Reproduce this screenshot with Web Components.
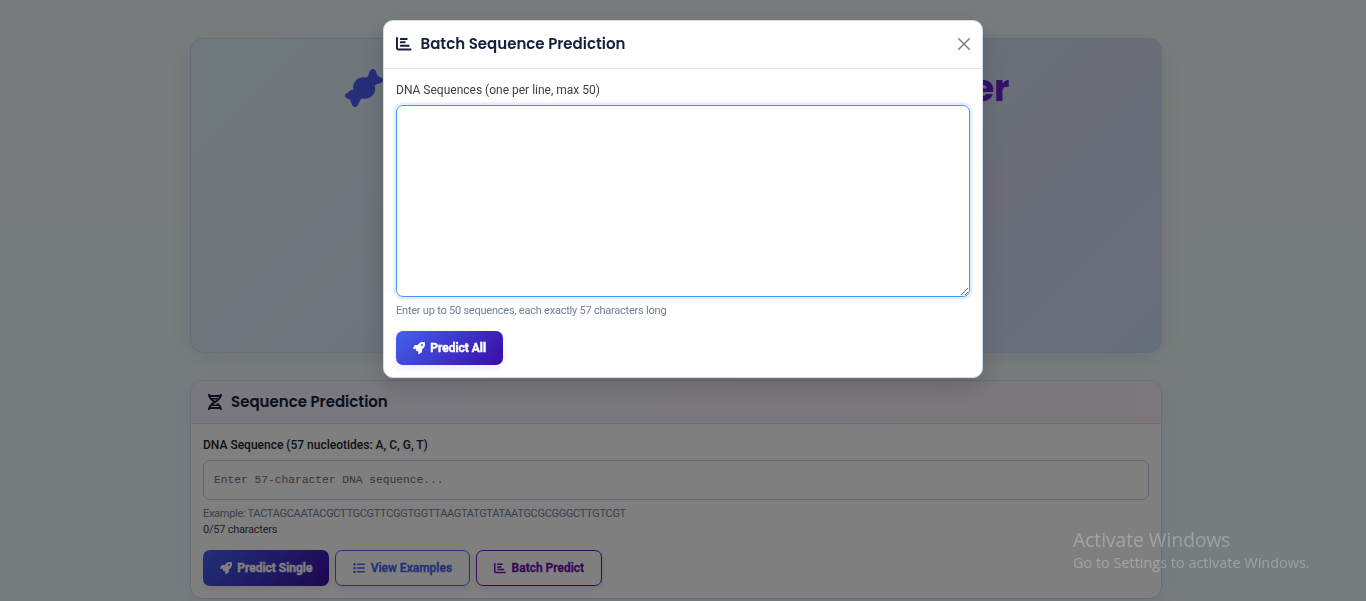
<!DOCTYPE html>
<html lang="en">
<head>
<meta charset="utf-8">
<title>Sequence Prediction</title>
<style>
html,body{margin:0;height:100%;overflow:hidden}
body{font-family:Roboto,"Liberation Sans",sans-serif;font-size:12px;line-height:18px;color:#212529;background:linear-gradient(180deg,#f1f8f9,#f0f8fc 35%,#eff8fe)}
</style>
</head>
<body>
<predictor-page></predictor-page>
<batch-modal heading="Batch Sequence Prediction">
  <form-field label="DNA Sequences (one per line, max 50)" multiline hint="Enter up to 50 sequences, each exactly 57 characters long" style="--hint-tracking:-.225px"></form-field>
  <app-button icon="rocket" variant="primary">Predict All</app-button>
</batch-modal>
<activation-note></activation-note>
<script>
const ICONS={
 chart:['0 0 512 512','<path d="M32 32c17.7 0 32 14.3 32 32V400c0 8.800 7.200 16 16 16H480c17.700 0 32 14.300 32 32s-14.300 32-32 32H80c-44.200 0-80-35.800-80-80V64C0 46.300 14.300 32 32 32zm96 64c0-17.700 14.300-32 32-32l192 0c17.700 0 32 14.300 32 32s-14.300 32-32 32l-192 0c-17.700 0-32-14.300-32-32zm32 80H288c17.700 0 32 14.300 32 32s-14.300 32-32 32H160c-17.700 0-32-14.300-32-32s14.300-32 32-32zm0 112H416c17.700 0 32 14.300 32 32s-14.300 32-32 32H160c-17.700 0-32-14.300-32-32s14.300-32 32-32z"/>'],
 rocket:['0 0 512 512','<path d="M156.600 384.900L125.700 354c-8.500-8.500-11.500-20.800-7.700-32.200c3-8.900 7-20.500 11.800-33.800L24 288c-8.600 0-16.600-4.600-20.900-12.100s-4.200-16.700 .2-24.100l52.500-88.500c13-21.900 36.500-35.300 61.900-35.300l82.300 0c2.400-4 4.800-7.700 7.200-11.300C289.100-4.100 411.100-8.100 483.900 5.300c11.600 2.100 20.600 11.200 22.800 22.800c13.400 72.900 9.300 194.800-111.400 276.700c-3.500 2.400-7.300 4.800-11.300 7.200v82.300c0 25.400-13.400 49-35.300 61.900l-88.500 52.500c-7.400 4.400-16.600 4.500-24.100 .2s-12.100-12.200-12.100-20.900V380.800c-14.100 4.900-26.400 8.900-35.700 11.900c-11.200 3.600-23.400 .5-31.800-7.800zM384 168a40 40 0 1 0 0-80 40 40 0 1 0 0 80z"/>'],
 list:['0 0 512 512','<rect x="16" y="48" width="96" height="96" rx="24"/><rect x="16" y="208" width="96" height="96" rx="24"/><rect x="16" y="368" width="96" height="96" rx="24"/><rect x="160" y="64" width="352" height="64" rx="32"/><rect x="160" y="224" width="352" height="64" rx="32"/><rect x="160" y="384" width="352" height="64" rx="32"/>'],
 dna:['0 0 448 512','<path d="M.1 494.1c-1.100 9.500 6.300 17.800 15.900 17.800l32.300.1c8.100 0 14.900-5.900 16-13.900.7-4.900 1.800-11.100 3.400-18.100H380c1.600 6.900 2.900 13.200 3.500 18.100 1.100 8 7.900 14 16 13.900l32.300-.1c9.600 0 17.100-8.300 15.900-17.800-4.600-37.900-25.600-129-118.900-207.700-17.600 12.400-37.100 24.200-58.500 35.400 6.200 4.600 11.400 9.400 17 14.200H159.700c21.300-18.100 47-35.600 78.700-51.400C410.500 199.100 442.100 65.800 447.900 17.900 449 8.400 441.600.1 432 .1L399.600 0c-8.100 0-14.900 5.900-16 13.900-.7 4.900-1.800 11.100-3.400 18.100H67.800c-1.600-7-2.700-13.100-3.400-18.100-1.100-8-7.900-14-16-13.900L16.100.1C6.500.1-1 8.400.1 17.900 5.300 60.800 31.400 171.800 160 256 31.500 340.200 5.300 451.200.1 494.100zM224 219.600c-25.100-13.700-46.400-28.400-64.300-43.600h128.500c-17.800 15.200-39.100 30-64.200 43.600zM355.100 96c-5.800 10.400-12.800 21.100-21 32H114c-8.300-10.900-15.300-21.600-21-32h262.200zM92.900 416c5.800-10.400 12.800-21.100 21.100-32h219.400c8.300 10.900 15.400 21.600 21.200 32H92.900z"/>'],
 candy:['0 0 38 38','<path d="M8.500 21.500C7 20 5.500 21.500 4 22.800C2 24.300 0 24.500 0 26.500C0 28.500 1.500 29.300 3 29.800C5 30.500 5.600 31.500 6.200 33.500C6.800 35.800 7.600 38 9.600 38C11.800 38 13 36.500 14 34C14.700 32 15.500 30.500 16.500 29.500C25.500 31.500 32 24 29.700 16.500C31 15 33 15 35 14.200C37 13.500 38 12.500 38 10.800C38 9 36.500 8.500 35 8C33 7.300 32.300 6.300 31.700 4.500C31 2.200 30.200 0 28.200 0C26.200 0 25 1.500 24.200 3.800C23.500 6 23 7.500 21.500 8.600C12.500 7 6.500 14 8.500 21.500Z"/>'],
 close:['0 0 16 16','<path d="M2 2L14 14M14 2L2 14" fill="none" stroke="currentColor" stroke-width="1.7" stroke-linecap="round"/>']
};
const define=(name,render)=>customElements.define(name,class extends HTMLElement{
  connectedCallback(){ if(!this.shadowRoot) this.attachShadow({mode:'open'}).innerHTML=render(this); }
});

define('app-icon',el=>{const [box,art]=ICONS[el.getAttribute('name')];
 return `<style>:host{display:block;flex:none;width:12px;height:12px}svg{display:block;width:100%;height:100%;fill:currentColor}</style><svg viewBox="${box}">${art}</svg>`;});

define('app-button',el=>`<style>
:host{display:inline-flex}
button{all:unset;box-sizing:border-box;display:flex;align-items:center;gap:5.500px;padding:8px 16.800px;border-radius:7px;font:600 12px/18px Roboto,"Liberation Sans",sans-serif;white-space:nowrap;-webkit-text-stroke:.5px currentColor;box-shadow:0 3px 7px rgba(0,0,0,.08)}
.primary{color:#fff;background:linear-gradient(135deg,#4361ee,#3a0ca3)}
.outline,.accent{border:1px solid;color:#4361ee;-webkit-text-stroke-width:.3px;padding:7px 17px}
.accent{color:#7209b7}
</style><button class="${el.getAttribute('variant')}"><app-icon name="${el.getAttribute('icon')}"></app-icon><slot></slot></button>`);

define('form-field',el=>{const multi=el.hasAttribute('multiline');
 return `<style>
:host{display:flex;flex-direction:column}
label{font-weight:${multi?400:500};color:${multi?'#3c3f43':'#212529'};line-height:18px;margin-bottom:6px}
textarea,input{box-sizing:border-box;width:100%;border-radius:7px;outline:0;background:transparent;font:11.250px/18px "Liberation Mono",monospace;margin:0}
textarea{height:192px;border:1px solid #4895ef;box-shadow:0 0 0 2.500px rgba(72,149,239,.16);resize:vertical}
input{height:40px;border:1px solid #c3cfe0;padding:0 10px}
input::placeholder{color:#6c6c6c;opacity:1}
small{font-size:11px;letter-spacing:var(--hint-tracking,0);line-height:16px;color:#718096;margin-top:5px;padding-top:.5px;height:15.500px}
</style><label>${el.getAttribute('label')}</label>${multi?'<textarea></textarea>':`<input placeholder="${el.getAttribute('placeholder')}">`}<small>${el.getAttribute('hint')}</small>`;});

define('hero-banner',()=>`<style>
:host{display:block;box-sizing:border-box;height:315px;padding-top:28px;border:1px solid rgba(190,212,235,.55);border-radius:14px;background:linear-gradient(135deg,#dff1fb 5%,#d9e5f5 45%,#d6dcf2 75%,#d1e0fa);box-shadow:0 5px 22px rgba(0,0,0,.08)}
h1{width:664px;margin:0 auto;padding-left:3px;display:flex;justify-content:space-between;align-items:center;font:700 36px/43px Poppins,Inter,sans-serif;color:#6a20d0}
app-icon{width:38px;height:38px;margin-left:-1px;margin-top:-2px;color:#4a5df0}
</style><h1><app-icon name="candy"></app-icon><span>er</span></h1>`);

define('panel-card',el=>`<style>
:host{display:block;box-sizing:border-box;border:1px solid #cbdcec;border-radius:12px;background:#fff;overflow:hidden;box-shadow:0 4px 18px rgba(0,0,0,.07)}
header{display:flex;align-items:center;gap:9px;height:42px;padding-left:17px;border-bottom:1px solid #cbdcec;background:linear-gradient(90deg,#f0f1fd,#f8f0f7);color:#14213d}
h2{margin:0;font:600 15px/24px Poppins,Inter,sans-serif}
app-icon{width:14px;height:16px}
section{padding:12px}
</style><header><app-icon name="${el.getAttribute('icon')}"></app-icon><h2>${el.getAttribute('heading')}</h2></header><section><slot></slot></section>`);

define('predictor-page',()=>`<style>
:host{display:block;padding:38px 14px 0 0}
main{width:972px;margin:0 auto;display:flex;flex-direction:column;gap:27px}
.count{font-size:11px;letter-spacing:-.23px;line-height:16px;padding-top:.5px;color:#3f4650}
.actions{display:flex;gap:6px;margin-top:12.500px;height:36px}
</style><main><hero-banner></hero-banner>
<panel-card icon="dna" heading="Sequence Prediction">
<form-field label="DNA Sequence (57 nucleotides: A, C, G, T)" placeholder="Enter 57-character DNA sequence..." hint="Example: TACTAGCAATACGCTTGCGTTCGGTGGTTAAGTATGTATAATGCGCGGGCTTGTCGT" style="--hint-tracking:-.3px"></form-field>
<div class="count">0/57 characters</div>
<div class="actions"><app-button icon="rocket" variant="primary">Predict Single</app-button><app-button icon="list" variant="outline">View Examples</app-button><app-button icon="chart" variant="accent">Batch Predict</app-button></div>
</panel-card></main>`);

define('batch-modal',el=>`<style>
:host{position:fixed;inset:0;display:flex;justify-content:center;align-items:flex-start;padding-top:20px;background:rgba(0,0,0,.5)}
.dialog{box-sizing:border-box;width:600px;height:358px;border:1px solid #cfdcf0;border-radius:10px;background:#fff;box-shadow:0 8px 26px rgba(0,0,0,.17)}
header{box-sizing:border-box;display:flex;align-items:center;height:48px;padding:0 11px 2px 12px;border-bottom:1px solid #dee2e6;color:#14213d}
h2{margin:0 auto 0 9px;font:600 15px/24px Poppins,Inter,sans-serif}
header app-icon:first-child{width:15.500px;height:15.500px}
.close{width:14px;height:14px;color:#7b7b7b}
section{display:flex;flex-direction:column;align-items:flex-start;gap:13px;padding:12px}
::slotted(form-field){width:100%}
</style><div class="dialog"><header><app-icon name="chart"></app-icon><h2>${el.getAttribute('heading')}</h2><app-icon class="close" name="close"></app-icon></header><section><slot></slot></section></div>`);

define('activation-note',()=>`<style>
:host{position:fixed;left:1073px;top:527px;display:block;font-family:"Segoe UI","Open Sans",sans-serif;color:rgba(255,255,255,.28);white-space:nowrap}
p{margin:0;font-size:19.200px;line-height:26px}
p+p{font-size:14.450px;line-height:20px}
</style><p>Activate Windows</p><p>Go to Settings to activate Windows.</p>`);
</script>
</body>
</html>
